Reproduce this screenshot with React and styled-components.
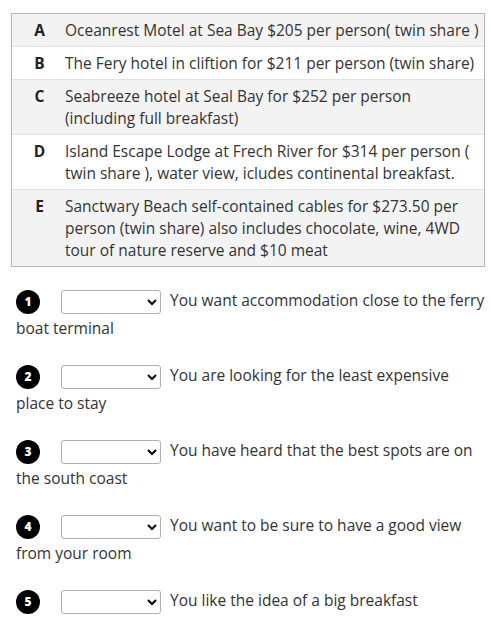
// Imports
import React from 'react';
import styled, { createGlobalStyle } from 'styled-components';

// Data
const options = [
	{ key: 'A', text: 'Oceanrest Motel at Sea Bay $205 per person( twin share )' },
	{ key: 'B', text: 'The Fery hotel in cliftion for $211 per person (twin share)' },
	{ key: 'C', text: 'Seabreeze hotel at Seal Bay for $252 per person (including full breakfast)' },
	{ key: 'D', text: 'Island Escape Lodge at Frech River for $314 per person ( twin share ), water view, icludes continental breakfast.' },
	{ key: 'E', text: 'Sanctwary Beach self-contained cables for $273.50 per person (twin share) also includes chocolate, wine, 4WD tour of nature reserve and $10 meat' },
];

const questions = [
	'You want accommodation close to the ferry boat terminal',
	'You are looking for the least expensive place to stay',
	'You have heard that the best spots are on the south coast',
	'You want to be sure to have a good view from your room',
	'You like the idea of a big breakfast',
];

// Component
const App = () => {

	// Return
	return(
		<Page>
			<Global/>

			{/* Options */}
			<OptionTable>
				{options.map((o, i) => (
					<OptionRow key={ o.key } shaded={ i % 2 === 0 }>
						<Letter>{ o.key }</Letter>
						<OptionText>{ o.text }</OptionText>
					</OptionRow>
				))}
			</OptionTable>
			{/* Options */}

			{/* Questions */}
			<QuestionList>
				{questions.map((q, i) => (
					<Question key={ i }>
						<Badge>{ i + 1 }</Badge>
						<Picker defaultValue="">
							<option value=""></option>
							{options.map(o => <option key={ o.key } value={ o.key }>{ o.key }</option>)}
						</Picker>
						{ q }
					</Question>
				))}
			</QuestionList>
			{/* Questions */}

		</Page>
	);

};

// Styled
const Global = createGlobalStyle`
	body{
		margin: 0;
		background: #fff;
		font-family: "Open Sans", Lato, sans-serif;
		color: #333;
	}
`;

const Page = styled.main`
	padding: 13px 6px 0 11px;
`;

const OptionTable = styled.div`
	border: 1px solid #b5b5b5;
	width: 472px;
`;

const OptionRow = styled.div`
	display: grid;
	grid-template-columns: 53px 1fr;
	padding: 5px 3px 5px 0;
	background: ${ p => p.shaded ? '#f3f3f3' : '#fff' };
	border-top: 1px solid #e2e2e2;
	font-size: 15.5px;
	line-height: 22px;
	&:first-child{
		border-top: none;
	}
`;

const Letter = styled.span`
	font-weight: 700;
	font-size: 15.5px;
	color: #222;
	text-align: center;
	padding-left: 2px;
`;

const OptionText = styled.span``;

const QuestionList = styled.div`
	padding: 19px 0 0 5px;
`;

const Question = styled.p`
	margin: 0 0 19px;
	font-size: 15.5px;
	line-height: 28px;
`;

const Badge = styled.span`
	display: inline-flex;
	align-items: center;
	justify-content: center;
	width: 24px;
	height: 24px;
	border-radius: 50%;
	background: #000;
	color: #fff;
	font-size: 12px;
	font-weight: 800;
	vertical-align: middle;
	margin-right: 21px;
`;

const Picker = styled.select`
	width: 100px;
	height: 24px;
	border: 1px solid #b0b0b0;
	border-radius: 3px;
	background: #fff;
	vertical-align: middle;
	margin-right: 9px;
`;

// Export
export default App;
